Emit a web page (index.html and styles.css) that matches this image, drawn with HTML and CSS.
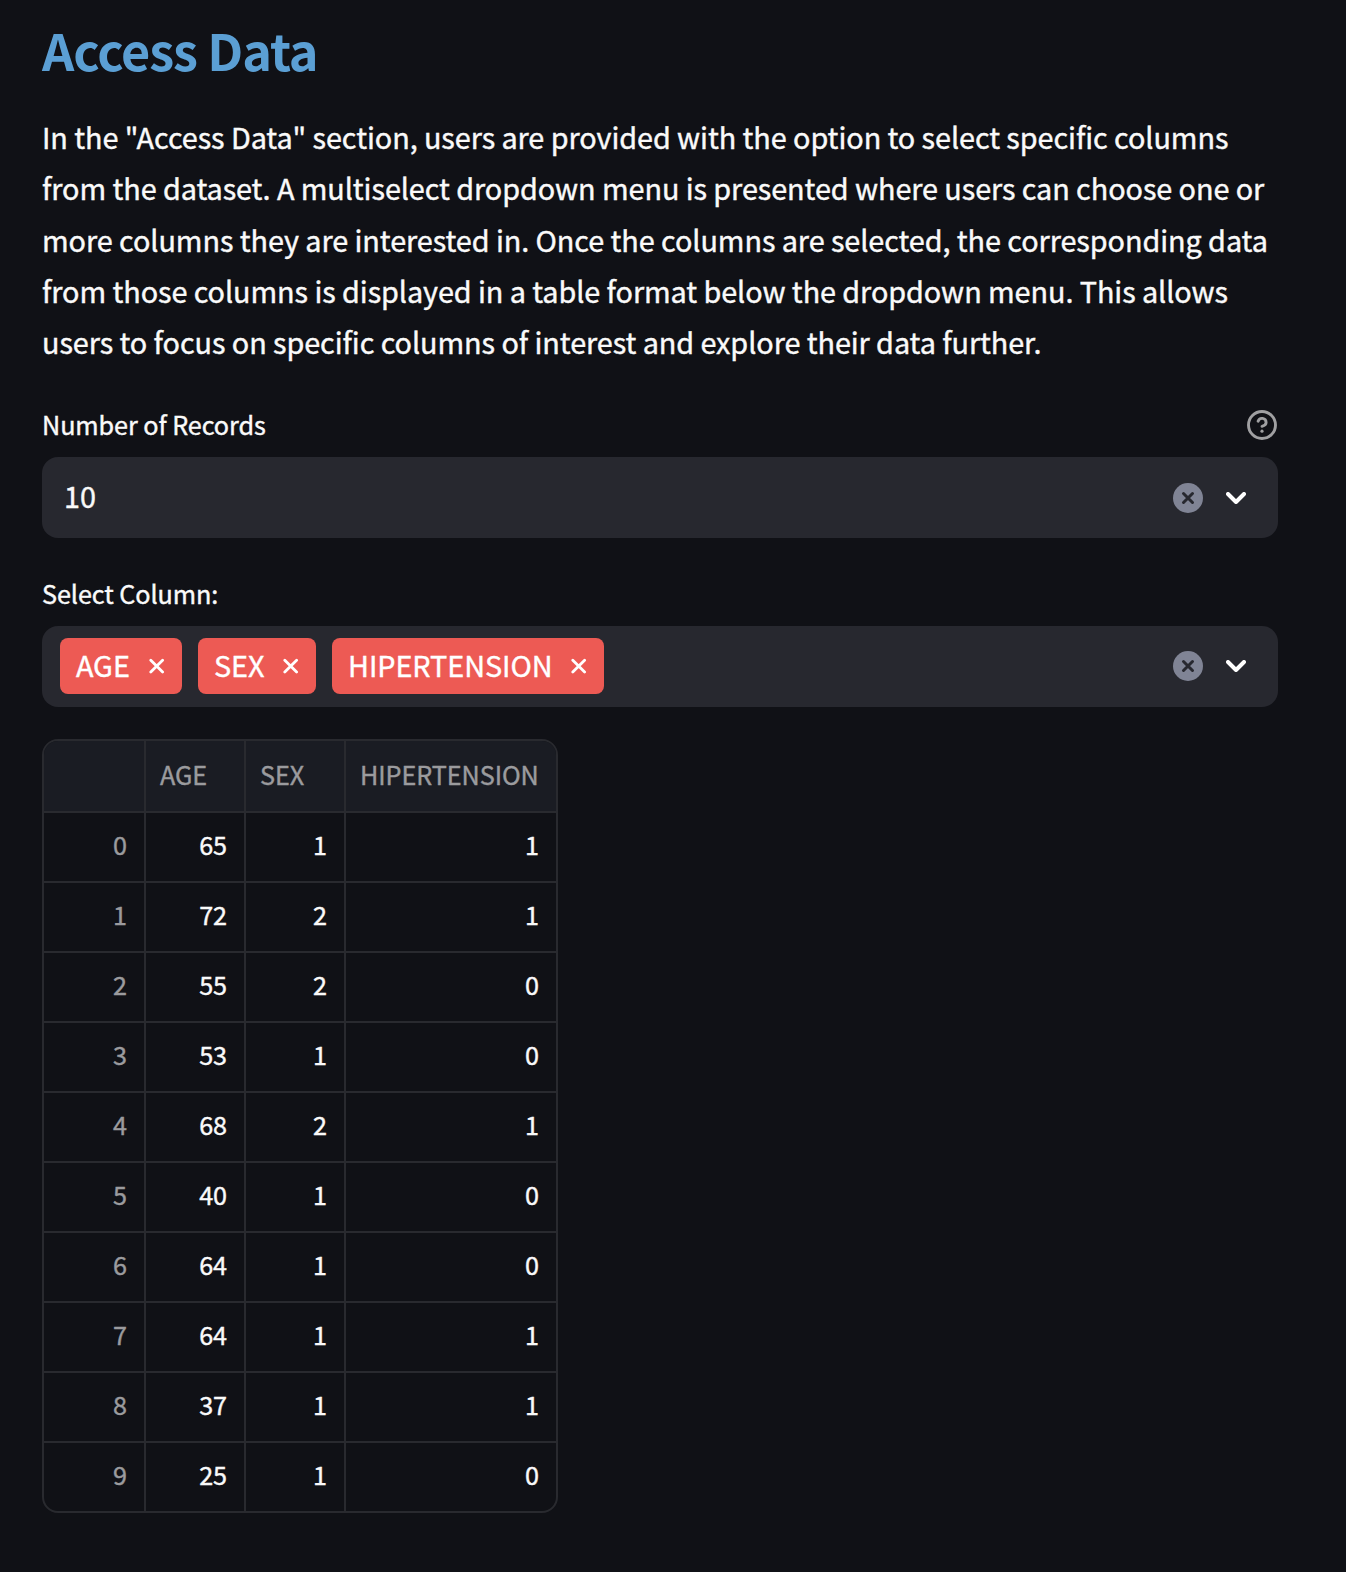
FILE: index.html
```html
<!DOCTYPE html>
<html lang="en">
<head>
<meta charset="utf-8">
<title>Access Data</title>
<link rel="stylesheet" href="styles.css">
</head>
<body>
<svg width="0" height="0" class="sprite">
<symbol id="clear" viewBox="0 0 30 30"><circle cx="15" cy="15" r="15" fill="#808495"/><path d="M10.5 10.5l9 9M19.5 10.5l-9 9" stroke="#27282f" stroke-width="3" stroke-linecap="round"/></symbol>
<symbol id="chevron" viewBox="0 0 20 12"><path d="M2 2l8 8 8-8" fill="none" stroke="#fff" stroke-width="4" stroke-linecap="round" stroke-linejoin="round"/></symbol>
<symbol id="remove" viewBox="0 0 16 16"><path d="M1.8 2.3l11.8 11.8M13.6 2.3L1.8 14.1" stroke="#fff" stroke-width="2.8" stroke-linecap="round"/></symbol>
</svg>
<main class="page">
<h1 class="title">Access Data</h1>
<p class="intro">In the "Access Data" section, users are provided with the option to select specific columns<br>from the dataset. A multiselect dropdown menu is presented where users can choose one or<br>more columns they are interested in. Once the columns are selected, the corresponding data<br>from those columns is displayed in a table format below the dropdown menu. This allows<br>users to focus on specific columns of interest and explore their data further.</p>

<div class="label"><span>Number of Records</span>
<svg class="help" width="30" height="30" viewBox="0 0 30 30" fill="none" stroke="#a0a0a2" stroke-width="2.9" stroke-linecap="round" stroke-linejoin="round"><circle cx="15" cy="15" r="13.5"/><path d="M11.1 11.2a4.1 4.1 0 0 1 8 1.3c0 2.7-4.1 3.8-4.1 3.8"/><path d="M15 21.2h.01" stroke-width="3.2"/></svg></div>
<div class="select">
<span class="value">10</span>
<svg class="clear" width="30" height="30"><use href="#clear"/></svg>
<svg width="20" height="12"><use href="#chevron"/></svg>
</div>

<div class="label label-second"><span>Select Column:</span></div>
<div class="select select-multi">
<div class="tags">
<span class="tag tag-age"><span>AGE</span><svg width="16" height="16"><use href="#remove"/></svg></span>
<span class="tag tag-sex"><span>SEX</span><svg width="16" height="16"><use href="#remove"/></svg></span>
<span class="tag tag-hip"><span>HIPERTENSION</span><svg width="16" height="16"><use href="#remove"/></svg></span>
</div>
<svg class="clear" width="30" height="30"><use href="#clear"/></svg>
<svg width="20" height="12"><use href="#chevron"/></svg>
</div>

<div class="frame">
<table class="data">
<colgroup><col class="c1"><col class="c2"><col class="c2"><col class="c4"></colgroup>
<thead><tr><th></th><th>AGE</th><th>SEX</th><th>HIPERTENSION</th></tr></thead>
<tbody>
<tr><td>0</td><td>65</td><td>1</td><td>1</td></tr>
<tr><td>1</td><td>72</td><td>2</td><td>1</td></tr>
<tr><td>2</td><td>55</td><td>2</td><td>0</td></tr>
<tr><td>3</td><td>53</td><td>1</td><td>0</td></tr>
<tr><td>4</td><td>68</td><td>2</td><td>1</td></tr>
<tr><td>5</td><td>40</td><td>1</td><td>0</td></tr>
<tr><td>6</td><td>64</td><td>1</td><td>0</td></tr>
<tr><td>7</td><td>64</td><td>1</td><td>1</td></tr>
<tr><td>8</td><td>37</td><td>1</td><td>1</td></tr>
<tr><td>9</td><td>25</td><td>1</td><td>0</td></tr>
</tbody>
</table>
</div>
</main>
</body>
</html>
```
FILE: styles.css
```css
* { box-sizing: border-box; }
body {
  margin: 0;
  background: #101116;
  color: #fafafa;
  font-family: "Noto Sans CJK SC", "Noto Sans", sans-serif;
  -webkit-text-stroke: 0.4px currentColor;
}
svg { display: block; flex: none; }
.sprite { position: absolute; }
.page { width: 1346px; height: 1572px; padding: 16px 68px 0 42px; overflow: hidden; }
.title {
  margin: 0;
  font-size: 50.4px;
  line-height: 68px;
  letter-spacing: -1.1px;
  color: #5b9fd4;
  -webkit-text-stroke: 0;
}
.intro {
  margin: 27px 0 0;
  font-size: 28.8px;
  line-height: 51.3px;
  letter-spacing: -0.07px;
  white-space: nowrap;
}
.label {
  display: flex;
  justify-content: space-between;
  align-items: center;
  height: 42px;
  margin-top: 36px;
  padding-right: 1px;
  font-size: 25.2px;
  line-height: 42px;
  letter-spacing: -0.07px;
}
.help { margin-top: 2px; }
.label-second { margin-top: 34px; }
.select {
  display: flex;
  align-items: center;
  height: 81px;
  margin-top: 12px;
  padding: 0 32px 0 22px;
  border-radius: 16px;
  background: #27282f;
  font-size: 28.8px;
}
.select-multi { padding: 0 32px 1px 18px; }
.value, .tags { flex: 1; }
.value { padding-bottom: 5px; }
.tags { display: flex; gap: 16px; }
.clear { margin-right: 23px; }
.tag {
  display: flex;
  align-items: center;
  justify-content: space-between;
  height: 56px;
  padding: 0 17.5px 0 16px;
  border-radius: 8px;
  background: #ed5a54;
  color: #fff;
  line-height: 54px;
  letter-spacing: -0.07px;
}
.tag span { height: 56px; }
.tag-age { width: 122px; }
.tag-sex { width: 118px; }
.tag-hip { width: 272px; }
.frame {
  width: 516px;
  height: 774px;
  margin-top: 32px;
  border: 2px solid #292a2f;
  border-radius: 16px;
  overflow: hidden;
}
.data {
  width: 512px;
  table-layout: fixed;
  border-collapse: separate;
  border-spacing: 0;
  font-size: 25.2px;
  line-height: 60px;
  letter-spacing: -0.07px;
}
.c1, .c2 { width: 100px; }
.c4 { width: 212px; }
.data th, .data td { height: 70px; padding: 0 17px 4px 14px; }
.data th {
  background: #1a1c23;
  color: #9b9b9e;
  font-weight: 400;
  text-align: left;
}
.data td { padding-bottom: 6px; border-top: 2px solid #292a2f; text-align: right; }
.data th + th, .data td + td { border-left: 2px solid #292a2f; }
.data td:first-child { color: #9b9b9e; }
```
